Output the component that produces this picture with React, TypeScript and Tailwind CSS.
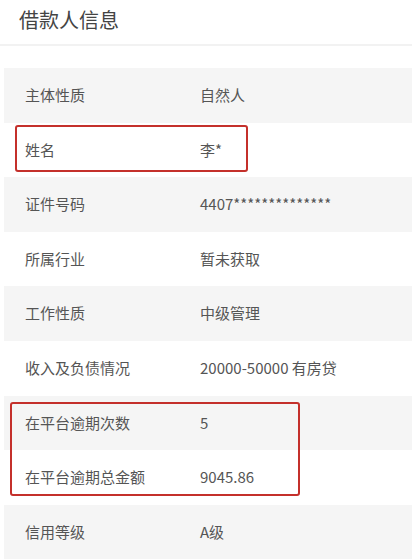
const rows: [string, string][] = [
  ['主体性质', '自然人'],
  ['姓名', '李*'],
  ['证件号码', '4407**************'],
  ['所属行业', '暂未获取'],
  ['工作性质', '中级管理'],
  ['收入及负债情况', '20000-50000 有房贷'],
  ['在平台逾期次数', '5'],
  ['在平台逾期总金额', '9045.86'],
  ['信用等级', 'A级'],
];

export default function App() {
  return (
    <div
      className="w-[412px] h-[559px] overflow-hidden bg-white text-[#555]"
      style={{ fontFamily: '"Noto Sans CJK SC", "Noto Sans", sans-serif' }}
    >
      {/* Header */}
      <div className="h-[46px] border-b-2 border-[#f2f2f2] pl-[19px] flex items-center">
        <h2 className="text-[20px] leading-none text-[#444] font-normal -mt-[4px]">借款人信息</h2>
      </div>

      {/* Info table */}
      <div className="relative mt-[22px] ml-[4px]">
        {rows.map(([label, value], i) => (
          <div
            key={label}
            className={`h-[54.6px] flex items-center text-[15px] ${i % 2 === 0 ? 'bg-[#f5f5f5]' : 'bg-white'}`}
          >
            <span className="w-[196px] pl-[21px]">{label}</span>
            <span>{value}</span>
          </div>
        ))}

        {/* highlight boxes */}
        <div className="absolute left-[11px] top-[57px] w-[233px] h-[47px] border-[2.5px] border-[#c4302b] rounded-[3px]" />
        <div className="absolute left-[6px] top-[334px] w-[290px] h-[94px] border-[2.5px] border-[#c4302b] rounded-[3px]" />
      </div>
    </div>
  );
}
